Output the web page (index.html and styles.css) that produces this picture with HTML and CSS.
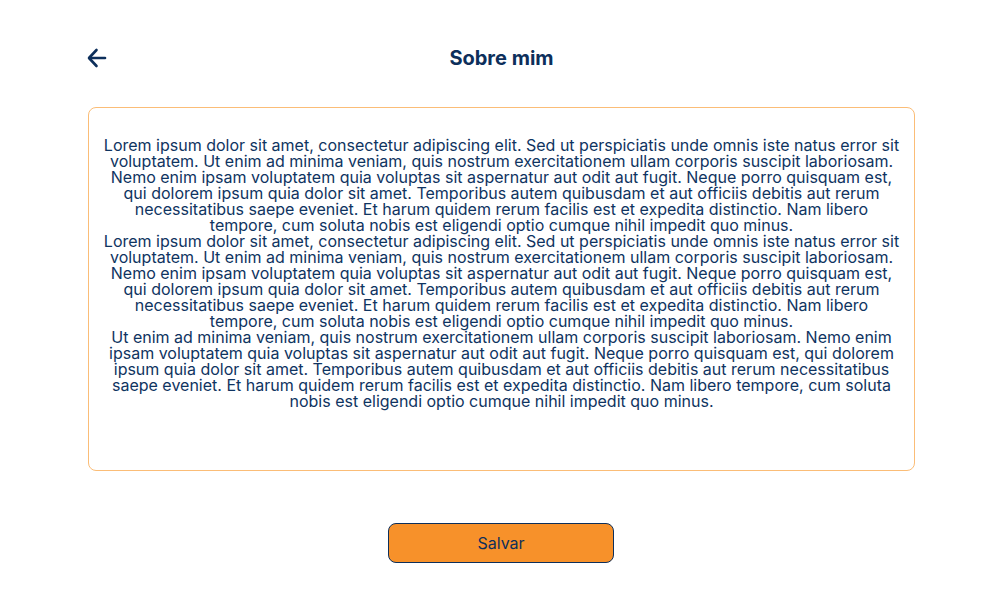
FILE: index.html
```html
<!DOCTYPE html>
<html lang="pt">
<head>
<meta charset="utf-8">
<title>Sobre mim</title>
<link rel="stylesheet" href="styles.css">
</head>
<body>
<div class="page">
  <header class="header">
    <button class="back" aria-label="Voltar">
      <svg width="20" height="20" viewBox="0 0 20 20" fill="none" stroke="currentColor" stroke-width="2.6" stroke-linecap="round" stroke-linejoin="round"><path d="M9.5 2 L2 10 L9.5 18"/><path d="M2.5 10 H18"/></svg>
    </button>
    <h1 class="title">Sobre mim</h1>
    <span class="spacer"></span>
  </header>
  <div class="about">
    <p>Lorem ipsum dolor sit amet, consectetur adipiscing elit. Sed ut perspiciatis unde omnis iste natus error sit<br>voluptatem. Ut enim ad minima veniam, quis nostrum exercitationem ullam corporis suscipit laboriosam.<br>Nemo enim ipsam voluptatem quia voluptas sit aspernatur aut odit aut fugit. Neque porro quisquam est,<br>qui dolorem ipsum quia dolor sit amet. Temporibus autem quibusdam et aut officiis debitis aut rerum<br>necessitatibus saepe eveniet. Et harum quidem rerum facilis est et expedita distinctio. Nam libero<br>tempore, cum soluta nobis est eligendi optio cumque nihil impedit quo minus.</p>
    <p>Lorem ipsum dolor sit amet, consectetur adipiscing elit. Sed ut perspiciatis unde omnis iste natus error sit<br>voluptatem. Ut enim ad minima veniam, quis nostrum exercitationem ullam corporis suscipit laboriosam.<br>Nemo enim ipsam voluptatem quia voluptas sit aspernatur aut odit aut fugit. Neque porro quisquam est,<br>qui dolorem ipsum quia dolor sit amet. Temporibus autem quibusdam et aut officiis debitis aut rerum<br>necessitatibus saepe eveniet. Et harum quidem rerum facilis est et expedita distinctio. Nam libero<br>tempore, cum soluta nobis est eligendi optio cumque nihil impedit quo minus.</p>
    <p>Ut enim ad minima veniam, quis nostrum exercitationem ullam corporis suscipit laboriosam. Nemo enim<br>ipsam voluptatem quia voluptas sit aspernatur aut odit aut fugit. Neque porro quisquam est, qui dolorem<br>ipsum quia dolor sit amet. Temporibus autem quibusdam et aut officiis debitis aut rerum necessitatibus<br>saepe eveniet. Et harum quidem rerum facilis est et expedita distinctio. Nam libero tempore, cum soluta<br>nobis est eligendi optio cumque nihil impedit quo minus.</p>
  </div>
  <div class="actions">
    <button class="save">Salvar</button>
  </div>
</div>
</body>
</html>
```

FILE: styles.css
```css
* { box-sizing: border-box; }
html, body { margin: 0; padding: 0; background: #ffffff; }
body {
  font-family: Inter, "Noto Sans", sans-serif;
  color: #0d2f5b;
}
.page {
  width: 827px;
  margin: 0 auto;
  padding-top: 44px;
}
.header {
  display: grid;
  grid-template-columns: 40px 1fr 40px;
  align-items: center;
  height: 28px;
}
.back {
  display: flex;
  align-items: center;
  background: none;
  border: none;
  padding: 0;
  margin-left: -1px;
  color: #0d2f5b;
  cursor: pointer;
}
.title {
  margin: 0;
  text-align: center;
  font-size: 20px;
  font-weight: 700;
  color: #0d2f5b;
}
.about {
  margin-top: 35px;
  height: 364px;
  border: 1px solid #fbbd77;
  border-radius: 8px;
  padding: 29px 8px 0;
  text-align: center;
  font-size: 16px;
  line-height: 16px;
  color: #0f3461;
  white-space: nowrap;
}
.about p { margin: 0; }
.actions {
  display: flex;
  justify-content: center;
  padding-right: 1px;
  margin-top: 52px;
}
.save {
  width: 226px;
  height: 40px;
  background: #f7912a;
  border: 1px solid #0d2f5b;
  border-radius: 8px;
  font-family: Inter, "Noto Sans", sans-serif;
  font-size: 16px;
  color: #0d2f5b;
  cursor: pointer;
}
```
